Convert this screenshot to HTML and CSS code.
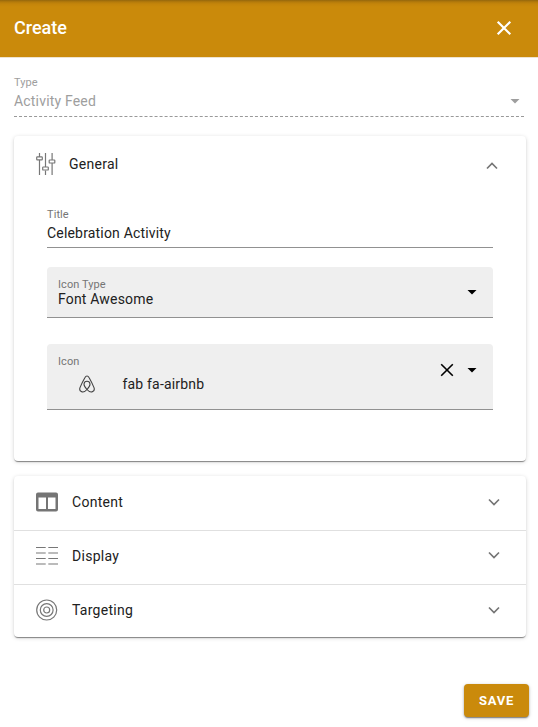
FILE: index.html
```html
<!DOCTYPE html>
<html lang="en">
<head>
<meta charset="utf-8">
<title>Create</title>
<link rel="stylesheet" href="styles.css">
</head>
<body>
<div class="dialog">
  <header class="toolbar">
    <h1 class="toolbar-title">Create</h1>
    <svg class="close" width="16" height="16" viewBox="0 0 16 16"><path d="M1.7 1.7 14.3 14.3M14.3 1.7 1.7 14.3"/></svg>
  </header>
  <main class="body">
    <div class="type-field">
      <div>
        <div class="label">Type</div>
        <div class="value">Activity Feed</div>
      </div>
      <svg class="caret" width="10" height="5" viewBox="0 0 10 5"><path d="M.5 0h9L5 4.500z"/></svg>
    </div>
    <section class="card general">
      <div class="general-head">
        <svg class="icon" width="20" height="24" viewBox="0 0 20 24" fill="none" stroke="#777" stroke-width="1.2"><path d="M3.5 1v4M3.5 8v15M9.500 1v14M9.500 18.500V23M16.100 1v7M16.100 11v12"/><rect x=".7" y="4.800" width="5.600" height="3" rx=".6"/><rect x="6.700" y="15" width="5.600" height="3" rx=".6"/><rect x="13.200" y="8" width="5.600" height="3" rx=".6"/></svg>
        <span class="heading">General</span>
        <svg class="chevron" width="12" height="8" viewBox="0 0 12 8"><path d="M1 6.500 6 1.500l5 5"/></svg>
      </div>
      <div class="title-field">
        <div class="label">Title</div>
        <div class="value">Celebration Activity</div>
      </div>
      <div class="filled type-select">
        <div>
          <div class="label">Icon Type</div>
          <div class="value">Font Awesome</div>
        </div>
        <svg class="caret" width="10" height="5" viewBox="0 0 10 5"><path d="M.5 0h9L5 4.500z"/></svg>
      </div>
      <div class="filled icon-select">
        <div>
          <div class="label">Icon</div>
          <div class="selected">
            <svg class="airbnb" width="16" height="18" viewBox="0 0 16 18"><path d="M8 14.500C5.800 12 4.900 10.400 5 9c.2-1.800 1.500-2.700 3-2.700s2.800.9 3 2.700c.1 1.400-.8 3-3 5.500Zm0 0c-2 2.300-4.100 3-5.700 2.100-1.500-.8-1.900-2.500-1.200-4.200C2 10.200 4.900 4.400 6 2.500 6.600 1.400 7.200 1 8 1s1.400.4 2 1.500c1.100 1.900 4 7.700 4.900 9.900.7 1.700.3 3.400-1.200 4.200-1.600.9-3.700.2-5.700-2.100Z"/></svg>
            <span class="value">fab fa-airbnb</span>
          </div>
        </div>
        <div class="actions">
          <svg class="clear" width="14" height="14" viewBox="0 0 14 14"><path d="M1.200 1.200 12.800 12.800M12.800 1.200 1.200 12.800"/></svg>
          <svg class="caret" width="10" height="5" viewBox="0 0 10 5"><path d="M.5 0h9L5 4.500z"/></svg>
        </div>
      </div>
    </section>
    <section class="card list">
      <div class="row">
        <svg class="icon" width="22" height="20" viewBox="0 0 22 20"><path fill="#757575" fill-rule="evenodd" d="M2 .5h18a2 2 0 0 1 2 2v15a2 2 0 0 1-2 2H2a2 2 0 0 1-2-2v-15a2 2 0 0 1 2-2ZM2.500 5.500v11.500H10V5.500Zm9.500 0v11.500h7.500V5.500Z"/></svg>
        <span class="heading">Content</span>
        <svg class="chevron" width="12" height="8" viewBox="0 0 12 8"><path d="M1 1.500l5 5 5-5"/></svg>
      </div>
      <div class="row">
        <svg class="icon" width="22" height="20" viewBox="0 0 22 20" fill="none"><path stroke="#777" d="M0 1.500h9.700M12.300 1.500H22M0 12.500h9.700M12.300 12.500H22"/><path stroke="#bbb" stroke-width="2" d="M0 7h9.700M12.300 7H22M0 18h9.700M12.300 18H22"/></svg>
        <span class="heading">Display</span>
        <svg class="chevron" width="12" height="8" viewBox="0 0 12 8"><path d="M1 1.500l5 5 5-5"/></svg>
      </div>
      <div class="row">
        <svg class="icon" width="22" height="22" viewBox="0 0 22 22" fill="none" stroke="#777" stroke-width="1.200"><circle cx="10.700" cy="11" r="10"/><circle cx="10.700" cy="11" r="6.400"/><circle cx="10.700" cy="11" r="3"/></svg>
        <span class="heading">Targeting</span>
        <svg class="chevron" width="12" height="8" viewBox="0 0 12 8"><path d="M1 1.500l5 5 5-5"/></svg>
      </div>
    </section>
  </main>
  <footer class="footer"><button class="save">SAVE</button></footer>
</div>
</body>
</html>
```
FILE: styles.css
```css
* { box-sizing: border-box; }
body { margin: 0; background: #fff; color: #212121; font-family: Roboto, sans-serif; font-size: 14px; }
svg { display: block; flex: none; }
.dialog { height: 727px; display: flex; flex-direction: column; overflow: hidden; }
.toolbar { height: 57px; flex: none; display: flex; align-items: center; justify-content: space-between; padding: 0 26px 1px 14px; background: linear-gradient(#94670d 0, #b57b0b 2px, #c4850b 4px, #ca8a0b 7px); box-shadow: 0 1px 0 #eee3d0; }
.toolbar-title { margin: 0; color: #fff; font-size: 18px; font-weight: 500; line-height: 24px; }
.close { fill: none; stroke: #fff; stroke-width: 2.200; }
.body { padding: 19px 12px 0 14px; }
.label { font-size: 11px; line-height: 13px; letter-spacing: .08px; color: #757575; }
.value { font-size: 14px; line-height: 18px; letter-spacing: .18px; }
.caret { fill: #000; }
.type-field { height: 41px; display: flex; justify-content: space-between; margin-right: 2px; padding-right: 4px; border-bottom: 1px dashed #999; }
.type-field .label, .type-field .value { color: #9e9e9e; }
.type-field .value { margin-top: 3px; }
.type-field .caret { fill: #9e9e9e; margin-top: 23px; }
.card { border-radius: 4px; background: #fff; box-shadow: 0 2px 1px -1px rgba(0,0,0,.3), 0 1px 1px rgba(0,0,0,.18), 0 1px 4px rgba(0,0,0,.16); }
.general { height: 325px; margin-top: 19px; padding: 0 33px; }
.general-head { height: 56px; display: flex; align-items: center; margin: 0 -5px 0 -11px; }
.heading { font-size: 14px; line-height: 20px; letter-spacing: .27px; }
.general-head .heading { margin-left: 13px; }
.chevron { margin-left: auto; fill: none; stroke: #757575; stroke-width: 1.700; }
.general-head .chevron { margin-top: 4px; }
.title-field { height: 56px; padding-top: 16px; border-bottom: 1px solid #919191; }
.title-field .value { margin-top: 3px; }
.filled { display: flex; justify-content: space-between; padding: 11px 16px 0 11px; background: #efefef; border-bottom: 1px solid #919191; border-radius: 4px 4px 0 0; }
.type-select { height: 51px; margin-top: 19px; }
.type-select .value { margin-top: -1px; }
.type-select .caret { margin-top: 12px; }
.icon-select { height: 66px; margin-top: 26px; }
.selected { display: flex; align-items: center; margin: 7px 0 0 20.500px; }
.selected .value { margin-left: 28px; }
.airbnb { fill: none; stroke: #424242; stroke-width: 1.100; }
.actions { display: flex; align-items: center; gap: 13px; height: 14px; margin-top: 8px; }
.clear { fill: none; stroke: #000; stroke-width: 1.600; }
.list { margin-top: 15px; }
.row { height: 54px; display: flex; align-items: center; padding: 0 26.500px 0 22px; }
.row .heading { margin: -2px 0 0 14px; }
.row .icon { margin-top: -2px; }
.row .chevron { margin-top: -3px; }
.row + .row { border-top: 1px solid #e0e0e0; }
.row:nth-child(2) { padding-bottom: 2px; }
.row:last-child { height: 53px; }
.footer { margin-top: auto; padding: 0 9px 10px 0; display: flex; justify-content: flex-end; }
.save { width: 65px; height: 33px; padding: 0; border: 0; border-radius: 4px; background: #ca8a0b; color: #fff; font: 700 13px/33px Roboto, sans-serif; letter-spacing: .8px; box-shadow: 0 2px 1px -1px rgba(0,0,0,.25), 0 1px 2px rgba(0,0,0,.3), 0 1px 4px rgba(0,0,0,.15); }
```
